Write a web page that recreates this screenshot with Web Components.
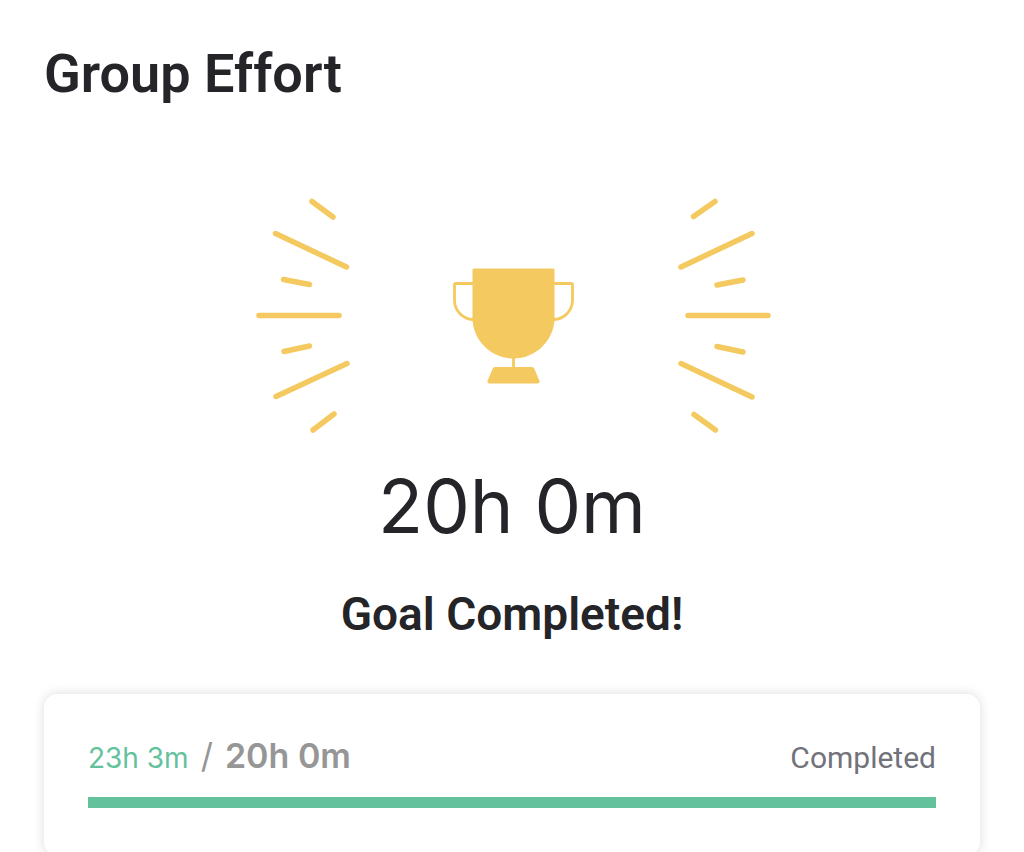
<!DOCTYPE html>
<html lang="en">
<head>
<meta charset="utf-8">
<meta name="viewport" content="width=device-width, initial-scale=1">
<title>Group Effort</title>
<style>
body { margin: 0; background: #fff; color: #242429; font-family: Roboto, "Liberation Sans", sans-serif; }
</style>
</head>
<body>
<group-effort>
  <span slot="title">Group Effort</span>
  <trophy-art slot="art"></trophy-art>
  <span slot="amount">20h 0m</span>
  <span slot="status">Goal Completed!</span>
  <goal-progress slot="progress" value="1383" max="1200">
    <span slot="done">23h 3m</span>
    <span slot="goal">20h 0m</span>
    <span slot="state">Completed</span>
  </goal-progress>
</group-effort>

<template id="group-effort">
  <style>
    :host { display: block; padding: 44px 44px 0; }
    h1, h2, p { margin: 0; }
    h1 { font-size: 54px; line-height: 60px; font-weight: 600; }
    main { display: flex; flex-direction: column; }
    .hero { display: flex; flex-direction: column; align-items: center; padding: 88px 0 52px; }
    .amount { font: 400 74px/88px Inter, sans-serif; margin-top: 26px; }
    h2 { font-size: 46px; line-height: 56px; font-weight: 600; margin-top: 36px; }
  </style>
  <main>
    <h1><slot name="title"></slot></h1>
    <section class="hero">
      <slot name="art"></slot>
      <p class="amount"><slot name="amount"></slot></p>
      <h2><slot name="status"></slot></h2>
    </section>
    <slot name="progress"></slot>
  </main>
</template>

<template id="trophy-art">
  <style>
    :host { display: block; }
    svg { display: block; }
  </style>
  <svg width="520" height="244" viewBox="252 192 520 244" role="img" aria-label="Trophy" fill="none" stroke="#f4c95f" stroke-linecap="round" stroke-linejoin="round">
    <g stroke-width="5.5">
      <path d="M312 201.500L333 217M275.500 233.500L346.500 267M283.500 279.500L309.500 284.500M259 315.500H339M284 351.500L309.500 346M276 396.500L347 363.500M313 430L334 414"/>
      <path d="M715 201.500L693.500 216.500M752 233.500L681 267M743 280L717 285M688 315.500H768M717 346.500L743 352M681 363.500L752 397M694 414.500L715.500 430"/>
    </g>
    <path stroke-width="2.800" d="M473 283.500H456Q454.500 283.500 454.500 285V300C454.500 311 463 319 473 319.500M554 283.500H571Q572.500 283.500 572.500 285V300C572.500 311 564 319 554 319.500M513.500 357V369"/>
    <path fill="#f4c95f" stroke="none" d="M474 268.500H553Q554.500 268.500 554.500 270V318C554.500 340 536 358.500 513.500 358.500S472.500 340 472.500 318V270Q472.500 268.500 474 268.500ZM495 367H532Q533.500 367 534.500 369L539.500 381Q540 383.500 537.500 383.500H489.500Q487 383.500 487.500 381L492.500 369Q493.500 367 495 367Z"/>
  </svg>
</template>

<template id="goal-progress">
  <style>
    :host { display: block; box-sizing: border-box; padding: 40px 44px 48px; border-radius: 14px; background: #fff; box-shadow: 0 0 12px rgba(0, 0, 0, .14); }
    .row { display: flex; justify-content: space-between; align-items: baseline; line-height: 44px; white-space: nowrap; }
    .time { display: flex; align-items: baseline; gap: 12px; font-family: Inter, sans-serif; color: #969696; }
    .done { font-size: 28px; font-weight: 400; color: #63c29b; }
    .slash { font-size: 34px; font-weight: 400; }
    .goal { font-size: 34px; font-weight: 600; }
    .state { font-size: 30px; color: #72727b; }
    progress { display: block; appearance: none; width: 100%; height: 11px; margin-top: 17px; border: 0; background: #e8e8e8; }
    progress::-webkit-progress-bar { background: #e8e8e8; }
    progress::-webkit-progress-value { background: #63c29b; }
  </style>
  <label class="row" for="bar">
    <span class="time">
      <span class="done"><slot name="done"></slot></span>
      <span class="slash">/</span>
      <span class="goal"><slot name="goal"></slot></span>
    </span>
    <span class="state"><slot name="state"></slot></span>
  </label>
  <progress id="bar"></progress>
</template>

<script>
class TemplateElement extends HTMLElement {
  constructor() {
    super();
    this.attachShadow({ mode: "open" }).append(document.getElementById(this.localName).content.cloneNode(true));
  }
}
class GroupEffort extends TemplateElement {}
class TrophyArt extends TemplateElement {}
class GoalProgress extends TemplateElement {
  connectedCallback() {
    const bar = this.shadowRoot.querySelector("progress");
    bar.max = Number(this.getAttribute("max"));
    bar.value = Math.min(Number(this.getAttribute("value")), bar.max);
  }
}
customElements.define("group-effort", GroupEffort);
customElements.define("trophy-art", TrophyArt);
customElements.define("goal-progress", GoalProgress);
</script>
</body>
</html>
